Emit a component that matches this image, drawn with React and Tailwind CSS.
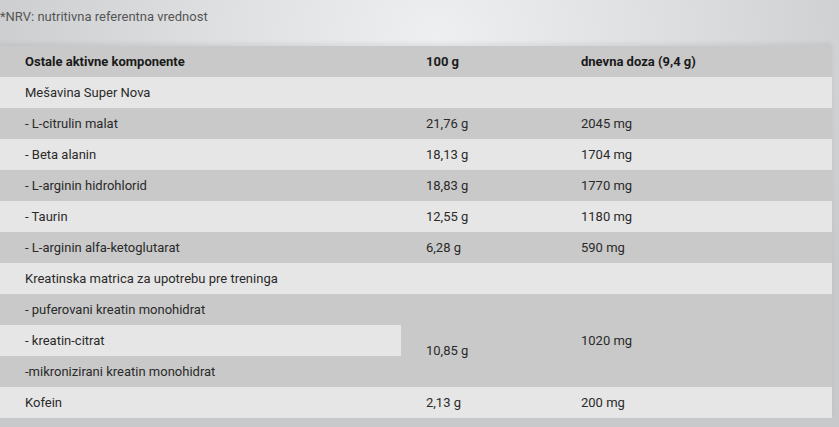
import React from 'react';

const rows = [
  { name: 'Mešavina Super Nova', a: '', b: '', light: true },
  { name: '- L-citrulin malat', a: '21,76 g', b: '2045 mg' },
  { name: '- Beta alanin', a: '18,13 g', b: '1704 mg', light: true },
  { name: '- L-arginin hidrohlorid', a: '18,83 g', b: '1770 mg' },
  { name: '- Taurin', a: '12,55 g', b: '1180 mg', light: true },
  { name: '- L-arginin alfa-ketoglutarat', a: '6,28 g', b: '590 mg' },
  { name: 'Kreatinska matrica za upotrebu pre treninga', a: '', b: '', light: true },
];

function Cell({ children, light, bold, className = '' }) {
  return (
    <div className={`h-[31px] flex items-center pl-[25px] ${light ? 'bg-[#e6e6e6]' : 'bg-[#c9c9c9]'} ${bold ? 'font-bold text-[#1a1a1a]' : ''} ${className}`}>
      {children}
    </div>
  );
}

export default function App() {
  return (
    <div className="w-[839px] h-[427px] overflow-hidden bg-[radial-gradient(ellipse_60%_90%_at_52%_8%,#eeeff1_0%,#dcdddf_50%,#c8c9cb_100%)] font-['Roboto',sans-serif] text-[13px] text-[#2a2a2a]">
      <p className="h-[46px] pt-[8px] text-[#555] leading-[18px]">*NRV: nutritivna referentna vrednost</p>
      <div className="w-[832px] grid grid-cols-[401px_155px_1fr] shadow-[0_-3px_4px_rgba(0,0,0,0.06)]">
        <Cell bold>Ostale aktivne komponente</Cell>
        <Cell bold>100 g</Cell>
        <Cell bold>dnevna doza (9,4 g)</Cell>
        {rows.map((r) => (
          <React.Fragment key={r.name}>
            <Cell light={r.light}>{r.name}</Cell>
            <Cell light={r.light}>{r.a}</Cell>
            <Cell light={r.light}>{r.b}</Cell>
          </React.Fragment>
        ))}
        <Cell>- puferovani kreatin monohidrat</Cell>
        <div className="row-span-3 bg-[#c9c9c9] pl-[25px] pt-[47px]">10,85 g</div>
        <div className="row-span-3 bg-[#c9c9c9] pl-[25px] flex items-center">1020 mg</div>
        <Cell light>- kreatin-citrat</Cell>
        <Cell>-mikronizirani kreatin monohidrat</Cell>
        <Cell light>Kofein</Cell>
        <Cell light>2,13 g</Cell>
        <Cell light>200 mg</Cell>
      </div>
    </div>
  );
}
